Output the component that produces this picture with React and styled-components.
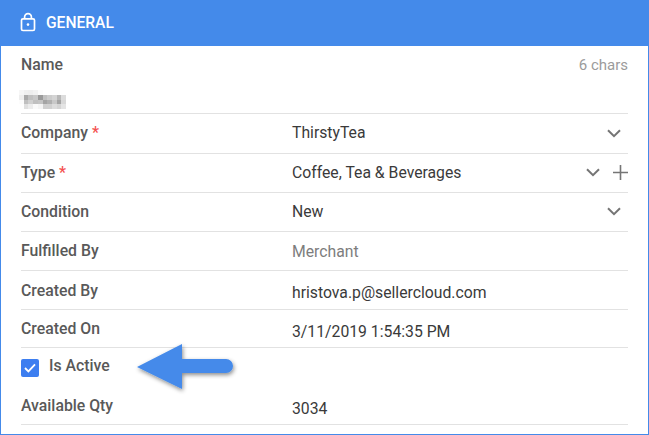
import styled, { createGlobalStyle } from 'styled-components';

const GlobalStyle = createGlobalStyle`
  html, body {
    margin: 0;
    padding: 0;
    background: #fff;
  }
  body {
    font-family: Roboto, "Liberation Sans", sans-serif;
  }
`;

const Panel = styled.div`
  position: relative;
  box-sizing: border-box;
  width: 649px;
  height: 435px;
  overflow: hidden;
  border: 1px solid #448aea;
  background: #fff;
`;

const Header = styled.div`
  display: flex;
  align-items: center;
  gap: 10px;
  height: 45px;
  padding: 0 0 2px 19px;
  box-sizing: border-box;
  background: #448aea;
  color: #fff;
  font-size: 15.6px;
  font-weight: 500;
`;

const LockIcon = styled.svg`
  margin-top: -1px;
`;

const Body = styled.div`
  padding: 0 20px;
`;

const NameRow = styled.div`
  height: 68px;
  box-sizing: border-box;
  border-bottom: 1px solid #e2e2e2;
  padding-top: 10px;
`;

const NameTop = styled.div`
  display: flex;
  justify-content: space-between;
  align-items: center;
  height: 17px;
`;

const Counter = styled.span`
  font-size: 15px;
  color: #9b9b9b;
`;

const Row = styled.div`
  display: flex;
  align-items: center;
  box-sizing: border-box;
  height: ${(p) => p.$h || 39}px;
  padding-bottom: ${(p) => p.$lift || 0}px;
  border-bottom: 1px solid #e2e2e2;
`;

const Label = styled.div`
  width: 271px;
  flex-shrink: 0;
  font-size: 15.8px;
  font-weight: 500;
  color: #595959;
`;

const CheckLabel = styled(Label)`
  margin-top: -4px;
`;

const Star = styled.span`
  color: #f4504e;
`;

const Value = styled.div`
  flex: 1;
  font-size: 15.75px;
  color: ${(p) => (p.$muted ? '#7d7d7d' : '#3a3a3a')};
  padding-top: ${(p) => p.$drop || 0}px;
`;

const Actions = styled.div`
  display: flex;
  align-items: center;
  gap: 13px;
  padding-right: ${(p) => p.$pad || 0}px;
  padding-top: ${(p) => p.$drop || 0}px;
`;

const CheckRow = styled.div`
  display: flex;
  align-items: center;
  gap: 10px;
  height: 38px;
`;

const Box = styled.span`
  display: flex;
  align-items: center;
  justify-content: center;
  width: 18px;
  height: 18px;
  margin-top: 1px;
  border-radius: 2px;
  background: #3d7ef0;
`;

const Arrow = styled.svg`
  position: absolute;
  left: 126px;
  top: 333px;
`;

const Mosaic = styled.svg`
  display: block;
  margin: 17px 0 0 -2px;
`;

const Lock = () => (
  <LockIcon width="16" height="20" viewBox="0 0 16 20" fill="none" stroke="#fff" strokeWidth="1.7">
    <rect x="1.5" y="6.8" width="13" height="11.700" rx="1.500" />
    <path d="M4.600 6.800V5a3.400 3.400 0 0 1 6.800 0v1.800" />
    <circle cx="8" cy="12.600" r="1.300" fill="#fff" stroke="none" />
  </LockIcon>
);

const Chevron = () => (
  <svg width="14" height="9" viewBox="0 0 14 9" fill="none" stroke="#757575" strokeWidth="2">
    <path d="M1 1.200l6 6 6-6" />
  </svg>
);

const Plus = () => (
  <svg width="15" height="15" viewBox="0 0 15 15" fill="none" stroke="#757575" strokeWidth="1.6">
    <path d="M7.500 0v15M0 7.500h15" />
  </svg>
);

// pixelated (censored) name, one entry per mosaic cell
const mosaic = [
  ['f6', 'f0', 'ee', 'f2', 'fc', 'ff', 'ff', 'ff', 'ff', 'ff'],
  ['ee', 'aa', 'c0', 'c8', '9a', 'c0', 'cc', 'd4', 'b8', 'dc'],
  ['fc', 'c0', 'd0', 'c0', 'c4', 'a4', 'b0', 'c8', 'a4', 'd8'],
  ['ff', 'e0', 'ec', 'fa', 'f4', 'd0', 'd0', 'dc', 'd4', 'e4'],
];

const Blurred = () => (
  <Mosaic width="47" height="19" viewBox="0 0 47 19" shapeRendering="crispEdges">
    {mosaic.map((row, y) =>
      row.map((c, x) => (
        <rect key={`${x}-${y}`} x={x * 4.7} y={y * 4.75} width="4.8" height="4.8" fill={`#${c}${c}${c}`} />
      ))
    )}
  </Mosaic>
);

const App = () => {
  return (
    <>
      <GlobalStyle />
      <Panel>
        <Header>
          <Lock />
          GENERAL
        </Header>
        <Body>
          <NameRow>
            <NameTop>
              <Label>Name</Label>
              <Counter>6 chars</Counter>
            </NameTop>
            <Blurred />
          </NameRow>
          <Row $h={40} $lift={2}>
            <Label>Company <Star>*</Star></Label>
            <Value>ThirstyTea</Value>
            <Actions $pad={7} $drop={2}><Chevron /></Actions>
          </Row>
          <Row $lift={2}>
            <Label>Type <Star>*</Star></Label>
            <Value>Coffee, Tea &amp; Beverages</Value>
            <Actions><Chevron /><Plus /></Actions>
          </Row>
          <Row $lift={2}>
            <Label>Condition</Label>
            <Value>New</Value>
            <Actions $pad={7}><Chevron /></Actions>
          </Row>
          <Row $lift={2}>
            <Label>Fulfilled By</Label>
            <Value $muted $drop={2}>Merchant</Value>
          </Row>
          <Row>
            <Label>Created By</Label>
            <Value $drop={4}>hristova.p@sellercloud.com</Value>
          </Row>
          <Row $h={38}>
            <Label>Created On</Label>
            <Value $drop={6}>3/11/2019 1:54:35 PM</Value>
          </Row>
          <CheckRow>
            <Box>
              <svg width="12" height="10" viewBox="0 0 12 10" fill="none" stroke="#fff" strokeWidth="1.8">
                <path d="M1 5l3.400 3.400L11 1.400" />
              </svg>
            </Box>
            <CheckLabel>Is Active</CheckLabel>
          </CheckRow>
          <Row>
            <Label>Available Qty</Label>
            <Value $drop={6}>3034</Value>
          </Row>
        </Body>
        <Arrow width="116" height="70" viewBox="0 0 116 70">
          <defs>
            <filter id="sh" x="-20%" y="-20%" width="140%" height="150%">
              <feDropShadow dx="1" dy="2" stdDeviation="2" floodColor="#000" floodOpacity="0.45" />
            </filter>
          </defs>
          <path d="M10 33L55 10V25H99a7 7 0 0 1 0 14H55V55Z" fill="#448aea" filter="url(#sh)" />
        </Arrow>
      </Panel>
    </>
  );
};

export default App;
